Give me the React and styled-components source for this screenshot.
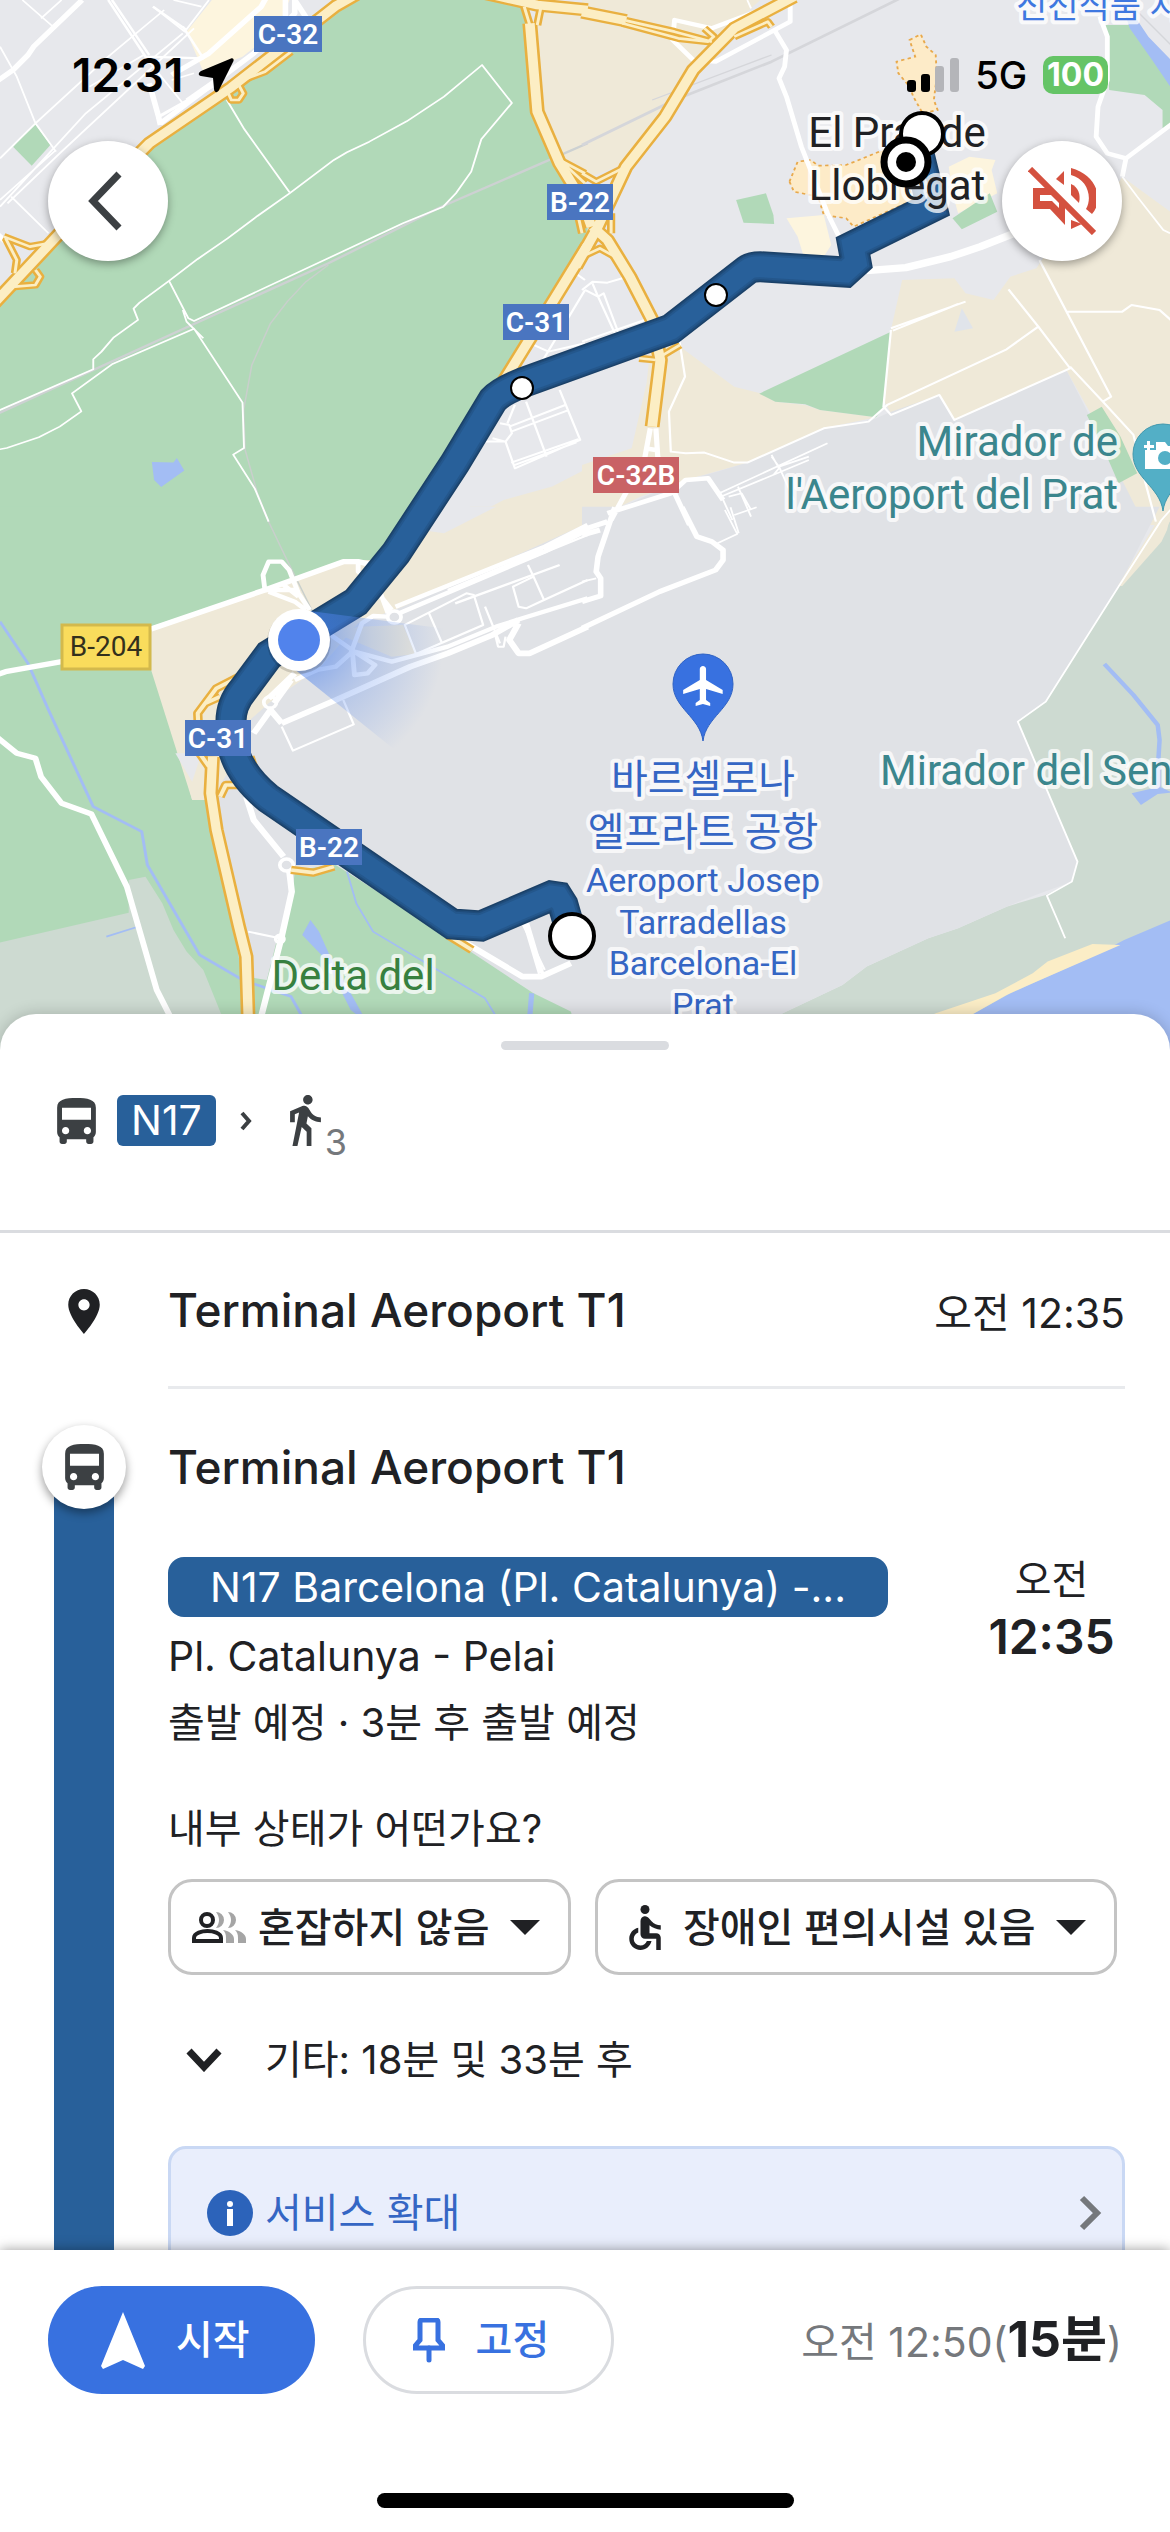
import React from "react";
import styled, { createGlobalStyle } from "styled-components";

const BLUE = "#28609a";
const INK = "#202124";

// every map area is drawn in its own quarter
const QUARTER = {
  nw: "scale(.3731 .3333)",
  ne: "translate(585 0) scale(.3731 .3333)",
  sw: "translate(0 510) scale(.3731 .3333)",
  se: "translate(585 510) scale(.3731 .3333)",
};

const AREAS = [
  ["nw", "#b1d9b8", "M-10 925L380 450L640 250L900 20L960 -10H1300L1410 20L1420 70L1440 340L1500 500L1575 620V720L1470 900L1320 1160L1180 1440L1090 1565H-10Z"],
  ["nw", "#efe9d8", "M1440 20L1575 50V540L1510 480L1440 330Z"],
  ["nw", "#fdf5de", "M500 95L575 -10H780L740 90L650 170L545 215Z"],
  ["nw", "#b1d9b8", "M35 440L93 370L135 435L85 497Z"],
  ["nw", "#a3bdf4", "M407 1386L465 1388L474 1374L494 1412L432 1461L413 1440Z"],
  ["nw", "#efe9d8", "M1240 1565L1350 1500L1480 1460L1575 1405V1565Z"],
  ["ne", "#efe9d8", "M-8 -10H480L360 110L110 490L-8 540Z"],
  ["ne", "#efe9d8", "M-8 1395L125 1345L165 1150L180 1000L255 1040L400 1160L470 1180L510 1205L590 1215L630 1230L780 1252L640 1285L430 1390L270 1440L150 1490L-8 1575Z"],
  ["ne", "#efe9d8", "M850 840L990 835L1020 880L1095 900L1140 830L1210 805L1230 770L1380 640L1440 530L1575 640V1575H1480L1400 1330L1290 1110L990 1260L950 1185L820 1240L800 1200L820 990Z"],
  ["ne", "#e0e2e6", "M-8 1575L160 1490L270 1440L340 1420L430 1390L640 1285L770 1260L820 1235L950 1185L990 1260L1290 1110L1390 1330L1500 1575Z"],
  ["ne", "#e0e4ea", "M1010 925L990 995L1040 985Z"],
  ["ne", "#b1d9b8", "M405 600L485 580L505 645L507 672L425 668Z"],
  ["ne", "#fdf5de", "M540 655L640 645L660 735L640 770L585 765L570 710Z"],
  ["ne", "#fdf5de", "M975 500L1030 470L1100 480L1090 510L1105 580L1000 640L985 580Z"],
  ["ne", "#b1d9b8", "M985 655L1085 580L1105 635L1010 688Z"],
  ["ne", "#b1d9b8", "M467 1181L820 995L798 1225L780 1252L630 1230L590 1213L510 1205Z"],
  ["ne", "#b1d9b8", "M1395 75H1460L1575 260V380L1548 385V330L1500 285L1405 270Z"],
  ["ne", "#a3bdf4", "M1450 50L1480 60L1510 110L1575 185V270L1520 180L1460 85Z"],
  ["ne", "#b1d9b8", "M1345 1245L1385 1220L1435 1310L1480 1420L1430 1450L1395 1360Z"],
  ["sw", "#b1d9b8", "M-10 -10H1120L1010 150H930L700 240L405 350L515 870L555 860L570 950L690 1620H-10Z"],
  ["sw", "#cddad1", "M-10 1300L345 1208V1110L390 1100L435 1180L465 1260L500 1325L545 1380L610 1560V1620H-10Z"],
  ["sw", "#efe9d8", "M405 350L700 240L930 150H1010L1130 60L1260 -10H1575V40L1080 290L960 340L860 470L720 580L640 870H515L405 480Z"],
  ["sw", "#e7e8ec", "M1130 60L1175 -10H1330L1190 70Z"],
  ["sw", "#e7e8ec", "M470 730L540 730L515 815Z"],
  ["sw", "#e0e2e6", "M1575 40V1620H1400L1430 1450L1200 1280L900 1070H790L785 1145L720 1420L660 1400L570 860L660 700L660 640L720 580L860 470L960 340L1080 290Z"],
  ["sw", "#efe9d8", "M960 350L1080 345L1115 432L1050 440L900 370Z"],
  ["sw", "#b1d9b8", "M660 1400L715 1410L740 1300L785 1145L790 1080L900 1065L1200 1280L1430 1450L1530 1505L1560 1620H660Z"],
  ["sw", "#a3bdf4", "M810 1275L832 1230L855 1265L885 1340L985 1540L940 1500L870 1345Z"],
  ["se", "#cddad1", "M1575 20L1540 90L1430 230L1235 575L1160 635L1320 1055L1305 1115L1235 1155L1130 1190L1000 1255L920 1285L755 1370L690 1425L530 1510L380 1620H1575Z"],
  ["se", "#e0e2e6", "M-8 -10H1540L1430 230L1235 575L1160 635L1320 1055L1305 1115L1215 1152L1130 1190L1000 1255L920 1285L755 1370L690 1425L530 1510L380 1620H-8Z"],
  ["se", "#efe9d8", "M1535 30L1575 -10L1560 60L1545 95L1440 228L1428 228Z"],
  ["se", "#a3bdf4", "M1575 1228L1445 1290L1360 1340L1140 1450L1040 1512L860 1620H1575Z"],
  ["se", "#fbedc6", "M940 1510L1100 1450L1200 1390L1240 1355L1360 1302L1435 1305L1200 1420L1130 1455L1040 1512L900 1600H760Z"],
  ["se", "#a3bdf4", "M1465 850L1540 830L1575 848L1535 852L1490 885Z"],
];

const DOWNTOWN = [
  "M870 120L900 103L915 140L940 165L943 230L935 300L945 330L905 340L880 290L870 260L840 220L835 185L885 170Z",
  "M548 545L570 485L605 480L625 497L700 495L800 450L860 540L880 600L720 680L700 655L640 645L625 590L560 575Z",
];

const LINES = [
  // railways
  ["nw", "#cdd1d2", 7, "M-10 1243L520 972L880 790L1180 622L1575 430"],
  ["nw", "#c9cfcc", 4, "M880 795L820 845L770 905L725 970L675 1095L653 1230L657 1350L690 1480L720 1565"],
  ["sw", "#c9cfcc", 4, "M705 0L765 140L840 310"],
  ["ne", "#d5d6da", 8, "M-8 435L240 300L500 185L850 -8"],
  ["ne", "#d5d6da", 4, "M180 300L500 165M1450 0L1575 140"],
  // canals
  ["sw", "#a3bdf4", 8, "M0 335L75 460L130 600L250 890L380 965L395 1065L465 1200L535 1335L650 1410L780 1460L810 1520"],
  ["sw", "#a3bdf4", 5, "M930 1085L955 1180L1000 1265L1300 1465L1330 1520M285 1280L365 1252"],
  ["sw", "#a3bdf4", 14, "M1425 1450L1420 1520"],
  ["se", "#a3bdf4", 12, "M1392 462L1470 555L1535 645L1540 690L1537 745V830"],
  // paths and minor streets
  ["nw", "#fff", 5, "M608 300L655 388L776 577M-10 1235L250 1108V1078L272 1055L305 1012L370 960L358 926L374 908L453 843L530 777L610 715L690 648L776 580L895 480L930 457L990 425L1090 364L1190 290L1292 195L1372 309L1290 418L1263 515L1222 580L1188 620L1080 670L520 963L505 955L453 843M-10 1350L18 1344L104 1312L160 1280L218 1234L193 1180L300 1093L520 986L650 1208L654 1344L625 1364L683 1466L720 1565M490 930L500 965L545 1015"],
  ["nw", "#fff", 5, "M0 140L45 230L95 370L150 455M0 475L95 370L290 170L440 30M60 0L140 78L160 60M110 55L165 0M30 590L130 700M0 600L150 450M20 610L160 460L520 85M0 620L230 340L490 100M410 20L495 95L560 0M465 0L540 20M240 260L385 165L490 310M520 220L460 240"],
  ["nw", "#fff", 7, "M290 0L390 170L545 175L490 80M300 0L400 165M500 90L410 20"],
  ["nw", "#fff", 6, "M1430 1035L1470 1055L1568 1030M1568 870L1450 1090M1568 840L1530 810M1500 1170L1555 1320L1380 1405L1355 1325L1300 1325M1410 1205L1465 1370M1365 1280L1515 1215M1370 1295L1520 1232M1370 1388L1550 1318M1375 1397L1545 1327M1340 1270L1365 1275L1372 1300L1355 1325L1320 1315M1380 1215L1360 1270"],
  ["ne", "#fff", 6, "M-8 870L20 845L60 848L100 835M0 870L35 890L80 1000M20 850L35 890L50 880L90 1000M-8 1025L160 960M250 1000L268 1130L225 1235L230 1355L270 1360L320 1358L400 1388H435L640 1285L760 1265L810 1215L1130 1048L1215 980L1135 868M820 990L800 1220L820 1245L950 1185L990 1260L1300 1105L1215 980M820 985L1020 905M825 992L1000 912M1218 780L1410 1190L1388 1205L1300 1100M1290 935H1440L1465 915L1540 930L1575 965M1388 1205L1470 1305L1500 1440L1530 1565"],
  ["ne", "#fff", 5, "M500 1365L520 1405L505 1425M360 1480L650 1330M365 1490L600 1380M360 1475L395 1560M410 1460L445 1550M385 1490L420 1480L445 1530M520 1400L560 1500M500 1370L520 1400L600 1370M1440 530L1480 590L1550 690L1568 700M435 0L445 25"],
  ["se", "#fff", 5, "M375 0L408 72L355 100M390 -8L412 70M400 15L460 -8M1575 -8L1545 30L1430 230L1235 575L1160 635L1320 1055L1305 1115L1238 1157L1270 1240L1287 1285M-8 215L30 205"],
  ["sw", "#fff", 6, "M1085 345L1250 250L1270 255L1295 345L1115 432ZM1150 310L1185 400M1300 290L1340 400M1375 230L1430 200L1458 270L1410 295L1390 290ZM1415 165L1430 200M1458 270L1575 210M755 650L785 722L948 643L920 570M1325 365L1335 410H1350L1355 380M665 1265L750 1285M1400 1240L1460 1380"],
  // main streets
  ["nw", "#fff", 15, "M-10 245L35 210L75 165L90 140L220 0M430 375L425 350L410 290L400 250M430 370L680 160L740 100L790 40V-10M460 225L560 160L700 20L715 -10M765 0V60L700 150M790 0L825 60M-10 700L20 730"],
  ["nw", "#fff", 9, "M425 350L600 240M500 300L640 190"],
  ["ne", "#fff", 13, "M550 -10V65L500 95L350 185L290 180L235 120L240 60L340 85L470 30M505 85L540 150L535 200L520 235L540 290L580 440L650 640L690 730M1380 50L1400 110V240L1375 320L1370 410L1400 460L1450 475L1575 370M1450 475L1440 530"],
  ["ne", "#fff", 22, "M755 812L860 803L980 770L1060 740L1150 700"],
  ["ne", "#fff", 14, "M175 1285L160 1375L70 1560M190 1285L195 1370L280 1575M60 1540L230 1480L270 1440L330 1435L370 1500M160 1345L190 1350"],
  ["sw", "#fff", 16, "M-10 495L15 485L165 455M405 357L710 240L920 155H960L1000 165M-10 680L45 730L95 745L110 800L165 880L245 912L340 1130L420 1440L470 1550"],
  ["sw", "#fff", 13, "M710 240L705 195L720 155H755L775 180L800 250L830 300M710 240H800M760 225L800 260M720 245L790 275L820 300M960 160V185L1000 230L1050 300M1020 250L1040 310M1060 290L1460 110L1575 45M1070 310L1460 125L1575 60M1040 320L1000 318L970 340L940 430L900 470L850 480L790 510M880 370L950 425L1050 455L1200 410L1330 350L1400 325L1575 265M945 430L950 495L985 490L1005 465L950 425"],
  ["sw", "#fff", 17, "M755 640L900 570L1100 470L1200 430L1320 375L1390 330M755 640L725 600L680 670M735 580L780 510M720 565L790 490M1575 350L1420 430H1390L1365 390L1390 340M660 860L680 930L760 1040M775 1080L782 1145L755 1280L700 1520M1220 1280L1400 1400H1450L1530 1360M1410 1240L1450 1390"],
  ["sw", "#fff", 7, "M1200 240L1455 120M1300 200L1575 75M1220 280L1500 165"],
  ["se", "#fff", 15, "M-8 355L200 245L350 180L370 150V120L340 95L300 80L260 -8M80 -8L35 140L30 185L42 205V258L-8 275M-8 60L60 35M-8 75L40 60"],
];

const MOTORWAYS = [
  ["nw", 30, "M-20 915L160 700L400 430L620 262L900 18L960 -20M1300 -20L1440 15L1575 30M1420 70L1440 335L1500 490L1560 600L1585 680M1575 735L1490 890L1330 1180L1290 1260"],
  ["nw", 12, "M10 710L80 740L130 730M15 715L45 780L40 820M40 860L95 855L108 830L95 810M610 275L620 300H640L652 280L640 255M650 240L710 215L780 155M1405 20L1420 75M1450 20L1440 75M1500 480L1568 520M1510 490L1568 550M1550 650L1560 700"],
  ["ne", 30, "M560 -10L400 85L290 210L215 350L110 500L30 690L-25 800M-8 36L110 62M20 680L60 720L120 830L180 960L202 1080L180 1280"],
  ["ne", 12, "M110 62L240 95L340 125M100 70L250 115L330 125L345 110L320 85M400 110L490 65L500 80M-8 520L30 545L110 500M70 700V640M-8 770L40 745L80 770M145 1075L190 1080M210 1065L255 1035"],
  ["sw", 29, "M570 740L565 850L580 960L640 1250L660 1340L668 1620"],
  ["sw", 15, "M650 495L580 535L530 610L535 730L560 770M550 580L590 560M670 740L685 790M590 860L605 825H640M780 1080L840 1088L895 1070M1200 1275L1265 1320"],
];

const SHIELDS = [
  { text: "C-32", x: 254, y: 16, w: 68 },
  { text: "B-22", x: 547, y: 184, w: 66 },
  { text: "C-31", x: 503, y: 304, w: 66 },
  { text: "C-32B", x: 593, y: 457, w: 86, fill: "#c96265" },
  { text: "C-31", x: 185, y: 720, w: 66 },
  { text: "B-22", x: 296, y: 829, w: 66 },
];

const ROUTE =
  "M572 936L563 905L558 897L551 896L481 926L452 924L268 798Q228 765 231 725Q230 705 243 690L269 655L356 602L396 553L455 463L493 400Q500 392 522 383L671 329L747 270Q752 266 765 267L845 272L856 262L853 246L932 207L918 150";

const BUS = "M4 16c0 .88.39 1.67 1 2.22V20c0 .55.45 1 1 1h1c.55 0 1-.45 1-1v-1h8v1c0 .55.45 1 1 1h1c.55 0 1-.45 1-1v-1.78c.61-.55 1-1.34 1-2.22V6c0-3.5-3.58-4-8-4s-8 .5-8 4v10zm3.5 1c-.83 0-1.5-.67-1.5-1.5S6.67 14 7.5 14s1.5.67 1.5 1.5S8.330 17 7.500 17zm9 0c-.83 0-1.5-.67-1.5-1.5s.67-1.500 1.500-1.500 1.500.67 1.500 1.500-.67 1.500-1.500 1.500zm1.500-6H6V6h12v5z";

function Icon({ box, w, h, color = "currentColor", children }) {
  return (
    <svg width={w} height={h} viewBox={box || `0 0 ${w} ${h}`} fill={color} aria-hidden="true">
      {children}
    </svg>
  );
}

function BusIcon() {
  return (
    <Icon box="4 2 16 19" w={39} h={46} color="#3c4043">
      <path d={BUS} />
    </Icon>
  );
}

function Map() {
  return (
    <MapSvg viewBox="0 0 1170 1060" preserveAspectRatio="xMidYMin slice" role="img" aria-label="지도">
      <defs>
        <radialGradient id="beam" gradientUnits="userSpaceOnUse" cx="299" cy="640" r="145">
          <stop offset="0" stopColor="#3f78e8" stopOpacity=".7" />
          <stop offset=".5" stopColor="#5b8bec" stopOpacity=".3" />
          <stop offset="1" stopColor="#5b8bec" stopOpacity="0" />
        </radialGradient>
      </defs>
      <rect width="1170" height="1060" fill="#e7e8ec" />
      {AREAS.map(([q, fill, d], i) => (
        <path key={i} transform={QUARTER[q]} fill={fill} d={d} />
      ))}
      {DOWNTOWN.map((d) => (
        <path key={d} transform={QUARTER.ne} d={d} fill="#fdebc8" stroke="#e8a94c" strokeWidth="5" strokeDasharray="9 9" />
      ))}
      <g fill="none" strokeLinejoin="round">
        {LINES.map(([q, color, width, d], i) => (
          <path key={i} transform={QUARTER[q]} stroke={color} strokeWidth={width} d={d} />
        ))}
        <g transform={QUARTER.sw} stroke="#fff" strokeWidth="10">
          <circle cx="1057" cy="321" r="18" />
          <circle cx="724" cy="577" r="17" />
          <circle cx="768" cy="1065" r="18" />
          <circle cx="750" cy="1287" r="11" />
        </g>
        {MOTORWAYS.map(([q, width, d], i) => (
          <path key={i} transform={QUARTER[q]} stroke="#e9b040" strokeWidth={width + 10} d={d} />
        ))}
        {MOTORWAYS.map(([q, width, d], i) => (
          <path key={i} transform={QUARTER[q]} stroke="#fceec4" strokeWidth={width - 4} d={d} />
        ))}
        <g strokeLinejoin="miter">
          <path d={ROUTE} stroke="#1b4168" strokeWidth="31" />
          <path d={ROUTE} stroke="#1f4c7b" strokeWidth="28" />
          <path d={ROUTE} stroke="#24578c" strokeWidth="25" />
          <path d={ROUTE} stroke={BLUE} strokeWidth="21" />
        </g>
      </g>

      {SHIELDS.map(({ text, x, y, w, fill = "#4a75c0" }) => (
        <g key={text + y}>
          <rect x={x} y={y} width={w} height="36" fill={fill} />
          <Shield x={x + w / 2} y={y + 28}>{text}</Shield>
        </g>
      ))}
      <rect x="62" y="625" width="88" height="44" fill="#f9dc5c" stroke="#d3b94c" strokeWidth="3" />
      <Shield x="106" y="656" $dark>B-204</Shield>

      <Place x="897" y="147" textAnchor="middle" fill={INK}>El Prat de</Place>
      <Place x="897" y="200" textAnchor="middle" fill={INK}>Llobregat</Place>
      <Place x="1118" y="456" textAnchor="end" fill="#3b868d">Mirador de</Place>
      <Place x="1118" y="509" textAnchor="end" fill="#3b868d">l'Aeroport del Prat</Place>
      <Place x="880" y="785" fill="#3b868d">Mirador del Sen</Place>
      <Place x="353" y="990" textAnchor="middle" fill="#37803f">Delta del</Place>
      <Place x="1016" y="18" fill="#3f78e0" $small>신선식품 시</Place>
      <g textAnchor="middle" fill="#3566c4">
        <Place x="703" y="793" $hangul>바르셀로나</Place>
        <Place x="703" y="846" $hangul>엘프라트 공항</Place>
        <Place x="703" y="892" $small>Aeroport Josep</Place>
        <Place x="703" y="934" $small>Tarradellas</Place>
        <Place x="703" y="975" $small>Barcelona-El</Place>
        <Place x="703" y="1017" $small>Prat</Place>
      </g>

      {/* airport and viewpoint pins */}
      <path d="M703 741C700 717 673 708 673 684A30 30 0 0 1 733 684C733 708 706 717 703 741Z" fill="#3871e0" stroke="#2f62c4" strokeWidth="1" />
      <path transform="translate(679 662) scale(2.08 2)" fill="#fff" d="M21 16v-2l-8-5V3.500c0-.83-.67-1.500-1.500-1.500S10 2.670 10 3.500V9l-8 5v2l8-2.500V19l-2 1.500V22l3.500-1 3.500 1v-1.500L13 19v-5.500l8 2.500z" />
      <path d="M1163 511C1160 487 1133 478 1133 454A30 30 0 0 1 1193 454C1193 478 1166 487 1163 511Z" fill="#53afc6" stroke="#4398ad" strokeWidth="1" />
      <path d="M1145 450V469H1180V446H1168L1165 442H1156V450ZM1147 441V445H1144V448H1147V452H1150V448H1154V445H1150V441Z" fill="#fff" />
      <circle cx="1165" cy="458" r="7" fill="#53afc6" />

      {/* stops */}
      <g fill="#fff" stroke="#000">
        <circle cx="522" cy="388" r="11" strokeWidth="2" />
        <circle cx="716" cy="295" r="11" strokeWidth="2" />
        <circle cx="572" cy="936" r="22" strokeWidth="4" />
        <circle cx="922" cy="134" r="21" strokeWidth="4" />
        <circle cx="906" cy="162" r="22" strokeWidth="7" />
      </g>
      <circle cx="906" cy="162" r="10" />

      <path d="M310 611L455 630L440 700L395 750L293 668Z" fill="url(#beam)" />
      <circle cx="299" cy="642" r="32" fill="#000" opacity=".15" />
      <circle cx="299" cy="640" r="31" fill="#fff" />
      <circle cx="299" cy="640" r="21" fill="#5183ec" />
    </MapSvg>
  );
}

function StatusBar() {
  return (
    <Status>
      <Clock>
        12:31
        <Icon w={36} h={35}>
          <path d="M33 .5L3 13C0 15 0 17.500 3 18L15 20L16 31C16.500 35 19.500 35 21 32L35.500 3C36 1 35 0 33 .5Z" />
        </Icon>
      </Clock>
      <Signals>
        <Icon w={52} h={34}>
          <rect y="22" width="9" height="12" rx="3" />
          <rect x="14" y="16" width="9" height="18" rx="3" />
          <rect x="28" y="8" width="9" height="26" rx="3" fill="#b4b5b9" />
          <rect x="43" width="9" height="34" rx="3" fill="#b4b5b9" />
        </Icon>
        <span>5G</span>
        <Battery>100</Battery>
      </Signals>
    </Status>
  );
}

function Caret() {
  return (
    <Icon w={30} h={15}>
      <path d="M0 0H30L15 15Z" />
    </Icon>
  );
}

function App() {
  return (
    <Screen>
      <GlobalStyle />
      <MapArea>
        <Map />
        <Overlay>
          <StatusBar />
          <Controls>
            <RoundButton type="button" aria-label="뒤로">
              <Icon w={42} h={60}>
                <path d="M32 3L6 30L32 57" fill="none" stroke="#3c4043" strokeWidth="7" />
              </Icon>
            </RoundButton>
            <RoundButton type="button" aria-label="음소거">
              <Icon w={68} h={68} color="#d4513f">
                <path fillRule="evenodd" d="M5 21H21L37 38V58L22 42H5ZM12 28V34H24L31 41V36L23 28Z" />
                <path d="M36 4V18L28 12Z" />
                <path d="M43 17C50 20 53 27 51 36L43 28Z" />
                <path d="M43 1C70 8 76 34 64 47L58 42C65 30 59 12 43 8Z" />
                <path d="M43 53L54 57L43 62Z" />
                <path d="M2 2L66 66" stroke="#d4513f" strokeWidth="6" />
              </Icon>
            </RoundButton>
          </Controls>
        </Overlay>
      </MapArea>

      <Sheet>
        <Grabber />
        <Summary>
          <BusIcon />
          <LineBadge>N17</LineBadge>
          <Icon w={12} h={20}>
            <path d="M2 2L9 10L2 18" fill="none" stroke="#3c4043" strokeWidth="4" />
          </Icon>
          <Walk>
            <Icon box="6 1.5 13 21.5" w={31} h={51} color="#3c4043">
              <path d="M13.500 5.500c1.100 0 2-.9 2-2s-.9-2-2-2-2 .9-2 2 .9 2 2 2zM9.800 8.900L7 23h2.100l1.800-8 2.100 2v6h2v-7.500l-2.100-2 .6-3C14.800 12 16.800 13 19 13v-2c-1.900 0-3.500-1-4.300-2.400l-1-1.600c-.4-.6-1-1-1.700-1-.3 0-.5.1-.8.1L6 8.300V13h2V9.600l1.800-.7" />
            </Icon>
            <sub>3</sub>
          </Walk>
        </Summary>

        <Origin>
          <RailCell>
            <Icon box="5 2 14 20" w={32} h={45} color={INK}>
              <path d="M12 2C8.130 2 5 5.130 5 9c0 5.250 7 13 7 13s7-7.750 7-13c0-3.870-3.130-7-7-7zm0 9.500c-1.380 0-2.500-1.120-2.500-2.500s1.120-2.500 2.500-2.500 2.500 1.120 2.500 2.500-1.120 2.500-2.500 2.500z" />
            </Icon>
          </RailCell>
          <OriginText>
            <Title>Terminal Aeroport T1</Title>
            <Latin>오전 12:35</Latin>
          </OriginText>
        </Origin>

        <Step>
          <Rail>
            <StepIcon>
              <BusIcon />
            </StepIcon>
            <Bar />
          </Rail>
          <StepBody>
            <StepTitle>Terminal Aeroport T1</StepTitle>
            <Departure>
              <LineInfo>
                <LinePill>N17 Barcelona (Pl. Catalunya) -...</LinePill>
                <Text>
                  <Latin>Pl. Catalunya - Pelai</Latin>
                </Text>
                <Text>출발 예정 · 3분 후 출발 예정</Text>
              </LineInfo>
              <Time>
                오전
                <b>12:35</b>
              </Time>
            </Departure>
            <Question>내부 상태가 어떤가요?</Question>
            <Chips>
              <Chip $left={21} $gap={12}>
                <Icon w={54} h={31}>
                  <g fill="none" stroke={INK} strokeWidth="4">
                    <circle cx="15" cy="8" r="6" />
                    <path d="M2 29V26C2 21 10 19 15.500 19S29 21 29 26V29Z" />
                  </g>
                  <g fill="#a5a5a5">
                    <path d="M24 0A8 8 0 0 1 24 16C28 11 28 5 24 0ZM36 0A8 8 0 0 1 36 16C40 11 40 5 36 0Z" />
                    <path d="M31 18C38 19 42 23 42 27V31H34V26C34 22 33 20 31 18ZM43 18C50 19 54 23 54 27V31H46V26C46 22 45 20 43 18Z" />
                  </g>
                </Icon>
                <select aria-label="혼잡도">
                  <option>혼잡하지 않음</option>
                </select>
                <Caret />
              </Chip>
              <Chip $left={31} $gap={22}>
                <Icon box="5 2 14 20" w={32} h={45}>
                  <circle cx="12" cy="4" r="2" />
                  <path d="M19 13v-2c-1.540.02-3.090-.75-4.070-1.830l-1.290-1.430c-.17-.19-.38-.34-.61-.45-.01 0-.01-.01-.02-.01H13c-.35-.2-.75-.3-1.190-.26C10.760 7.110 10 8.040 10 9.090V15c0 1.100.9 2 2 2h5v5h2v-5.500c0-1.100-.9-2-2-2h-3v-3.450c1.290 1.070 3.250 1.940 5 1.950zm-6.170 5c-.41 1.160-1.520 2-2.830 2-1.660 0-3-1.340-3-3 0-1.310.84-2.410 2-2.830V12.100c-2.280.46-4 2.480-4 4.900 0 2.760 2.240 5 5 5 2.420 0 4.440-1.720 4.900-4h-2.070z" />
                </Icon>
                <select aria-label="편의시설">
                  <option>장애인 편의시설 있음</option>
                </select>
                <Caret />
              </Chip>
            </Chips>
            <More type="button">
              <Icon w={36} h={24}>
                <path d="M3 3L18 19L33 3" fill="none" stroke={INK} strokeWidth="7" />
              </Icon>
              기타: 18분 및 33분 후
            </More>
            <Notice type="button">
              <Icon w={46} h={46}>
                <circle cx="23" cy="23" r="23" fill="#2c63ba" />
                <circle cx="23" cy="14" r="3" fill="#fff" />
                <rect x="20" y="19" width="6" height="17" fill="#fff" />
              </Icon>
              <span>서비스 확대</span>
              <Icon w={23} h={36}>
                <path d="M3 3L18 18L3 33" fill="none" stroke="#75787c" strokeWidth="6" />
              </Icon>
            </Notice>
          </StepBody>
        </Step>
      </Sheet>

      <Footer>
        <Actions>
          <Pill type="button" $primary>
            <Icon w={44} h={57}>
              <path d="M22 0L44 54L42 57L22 48L2 57L0 54Z" />
            </Icon>
            시작
          </Pill>
          <Pill type="button">
            <Icon w={32} h={45}>
              <g fill="none" stroke="#3871e0" strokeWidth="5">
                <path d="M9 2H23Q25 2 25 4V22L30 28V30H2V28L7 22V4Q7 2 9 2Z" />
                <path d="M16 30V42" strokeLinecap="round" />
              </g>
            </Icon>
            고정
          </Pill>
          <Arrival>
            오전 12:50(<b>15분</b>)
          </Arrival>
        </Actions>
        <HomeIndicator />
      </Footer>
    </Screen>
  );
}

const GlobalStyle = createGlobalStyle`
  * {
    box-sizing: border-box;
  }
  body {
    margin: 0;
    background: #fff;
  }
  button, select {
    font: inherit;
    color: inherit;
    border: 0;
    background: none;
    padding: 0;
    cursor: pointer;
  }
  svg {
    flex-shrink: 0;
  }
`;

const Screen = styled.main`
  display: flex;
  flex-direction: column;
  height: 100vh;
  overflow: hidden;
  color: ${INK};
  font-family: Inter, "Noto Sans CJK KR", sans-serif;
  font-size: 40px;
`;

const MapArea = styled.div`
  position: relative;
  flex-shrink: 0;
`;

const MapSvg = styled.svg`
  display: block;
  width: 100%;
`;

const Shield = styled.text`
  font-family: Roboto, sans-serif;
  font-size: 28px;
  font-weight: ${({ $dark }) => ($dark ? 400 : 600)};
  text-anchor: middle;
  fill: ${({ $dark }) => ($dark ? "#33301c" : "#fff")};
`;

const Place = styled.text`
  font-family: Roboto, "Noto Sans CJK KR", sans-serif;
  font-size: ${({ $small, $hangul }) => ($small ? 34 : $hangul ? 40 : 42)}px;
  paint-order: stroke;
  stroke: rgba(255, 255, 255, 0.75);
  stroke-width: 8px;
  stroke-linejoin: round;
`;

const Overlay = styled.div`
  position: absolute;
  inset: 0 0 auto;
  padding: 45px 48px 0;
`;

const Status = styled.div`
  display: flex;
  justify-content: space-between;
  align-items: center;
  height: 60px;
  padding: 0 14px 0 24px;
  color: #000;
`;

const Clock = styled.div`
  display: flex;
  align-items: center;
  gap: 14px;
  font-size: 46px;
  font-weight: 600;
`;

const Signals = styled.div`
  display: flex;
  align-items: center;
  gap: 16px;
  font-size: 38px;
  font-weight: 500;
`;

const Battery = styled.span`
  padding: 0 4px;
  border-radius: 10px;
  background: #65c466;
  color: #fff;
  font-size: 32px;
  font-weight: 700;
  line-height: 38px;
`;

const Controls = styled.div`
  display: flex;
  justify-content: space-between;
  margin-top: 36px;
`;

const RoundButton = styled.button`
  display: flex;
  align-items: center;
  justify-content: center;
  width: 120px;
  height: 120px;
  border-radius: 50%;
  background: #fff;
  box-shadow: 0 3px 8px rgba(0, 0, 0, 0.35);
`;

const Sheet = styled.section`
  position: relative;
  flex: 1;
  min-height: 0;
  margin-top: -46px;
  padding-top: 27px;
  border-radius: 36px 36px 0 0;
  background: #fff;
  box-shadow: 0 0 16px rgba(0, 0, 0, 0.2);
  overflow: hidden;
`;

const Grabber = styled.div`
  width: 168px;
  height: 9px;
  margin: 0 auto;
  border-radius: 5px;
  background: #dadce0;
`;

const Summary = styled.div`
  display: flex;
  align-items: center;
  padding: 45px 57px 84px;
  gap: 24px;
  border-bottom: 3px solid #dadce0;
`;

const LineBadge = styled.span`
  margin-left: -3px;
  padding: 0 14px;
  border-radius: 6px;
  background: ${BLUE};
  color: #fff;
  font-size: 41px;
  line-height: 51px;
`;

const Walk = styled.span`
  display: flex;
  align-items: flex-start;
  margin-left: 14px;
  gap: 4px;
  height: 51px;
  sub {
    margin-top: 29px;
    color: #75787c;
    font-size: 36px;
    line-height: 36px;
  }
`;

const Origin = styled.div`
  display: grid;
  grid-template-columns: 168px 1fr;
  padding-right: 45px;
`;

const RailCell = styled.div`
  display: flex;
  align-items: center;
  padding-left: 68px;
`;

const OriginText = styled.div`
  display: flex;
  align-items: center;
  justify-content: space-between;
  height: 156px;
  border-bottom: 3px solid #e8eaed;
`;

const Title = styled.h2`
  margin: 0;
  font-size: 46px;
  font-weight: 500;
`;

const Latin = styled.span`
  font-size: 41px;
`;

const Step = styled.div`
  display: grid;
  grid-template-columns: 168px 1fr;
  padding: 36px 45px 0 0;
`;

const Rail = styled.div`
  display: flex;
  flex-direction: column;
  align-items: center;
  width: 84px;
  margin-left: 42px;
`;

const StepIcon = styled.div`
  display: flex;
  flex-shrink: 0;
  align-items: center;
  justify-content: center;
  width: 84px;
  height: 84px;
  border-radius: 50%;
  background: #fff;
  box-shadow: 0 4px 10px rgba(0, 0, 0, 0.4);
  z-index: 1;
`;

const Bar = styled.div`
  flex: 1;
  width: 60px;
  margin-top: -42px;
  background: ${BLUE};
`;

const StepBody = styled.div`
  min-width: 0;
`;

const StepTitle = styled(Title)`
  line-height: 84px;
`;

const Departure = styled.div`
  display: flex;
  justify-content: space-between;
  gap: 90px;
  margin-top: 42px;
`;

const LineInfo = styled.div`
  flex: 1;
  min-width: 0;
  padding-top: 6px;
`;

const LinePill = styled.div`
  margin-bottom: 6px;
  padding: 0 42px;
  border-radius: 16px;
  background: ${BLUE};
  color: #fff;
  font-size: 41px;
  line-height: 60px;
  white-space: nowrap;
  overflow: hidden;
`;

const Text = styled.p`
  margin: 0;
  line-height: 66px;
`;

const Time = styled.div`
  display: flex;
  flex-direction: column;
  width: 147px;
  text-align: center;
  line-height: 57px;
  b {
    font-size: 48px;
    font-weight: 600;
  }
`;

const Question = styled(Text)`
  margin-top: 40px;
`;

const Chips = styled.div`
  display: flex;
  gap: 24px;
  margin-top: 17px;
`;

const Chip = styled.label`
  display: flex;
  align-items: center;
  height: 96px;
  padding: 0 28px 0 ${({ $left }) => $left}px;
  border: 3px solid #c4c4c4;
  border-radius: 24px;
  select {
    appearance: none;
    margin: 0 20px 0 ${({ $gap }) => $gap}px;
    font-weight: 500;
  }
`;

const More = styled.button`
  display: flex;
  align-items: center;
  gap: 43px;
  margin-top: 52px;
  padding-left: 18px;
  line-height: 66px;
`;

const Notice = styled.button`
  display: flex;
  align-items: center;
  gap: 12px;
  width: 100%;
  margin-top: 53px;
  padding: 31px 20px 31px 36px;
  border: 3px solid #c9d8f4;
  border-radius: 18px;
  background: #e9eefc;
  color: #3566c4;
  line-height: 66px;
  span {
    flex: 1;
    text-align: left;
  }
`;

const Footer = styled.footer`
  position: relative;
  padding: 36px 48px 24px;
  background: #fff;
  box-shadow: 0 0 12px rgba(0, 0, 0, 0.4);
`;

const Actions = styled.div`
  display: flex;
  align-items: center;
`;

const Pill = styled.button`
  display: flex;
  align-items: center;
  gap: 31px;
  height: 108px;
  margin-right: 48px;
  padding: ${({ $primary }) => ($primary ? "0 65px 0 53px" : "0 62px 0 47px")};
  border: ${({ $primary }) => ($primary ? 0 : "3px solid #dadce0")};
  border-radius: 54px;
  background: ${({ $primary }) => ($primary ? "#3871e0" : "#fff")};
  color: ${({ $primary }) => ($primary ? "#fff" : "#3871e0")};
  font-weight: 500;
  line-height: 54px;
`;

const Arrival = styled.span`
  margin-left: auto;
  color: #75787c;
  font-size: 41px;
  line-height: 54px;
  white-space: nowrap;
  b {
    color: ${INK};
    font-size: 50px;
    font-weight: 700;
  }
`;

const HomeIndicator = styled.div`
  width: 417px;
  height: 15px;
  margin: 99px auto 0;
  border-radius: 8px;
  background: #000;
`;

export default App;
